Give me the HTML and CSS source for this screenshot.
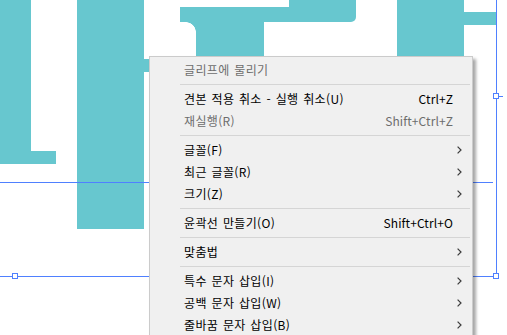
FILE: index.html
```html
<!DOCTYPE html>
<html lang="ko">
<head>
<meta charset="UTF-8">
<title>문자 메뉴</title>
<link rel="stylesheet" href="styles.css">
</head>
<body>
    <div class="canvas">
        <div class="shape s1"></div>
        <div class="shape s1-foot"></div>
        <div class="shape s2"></div>
        <div class="shape s2-edge"></div>
        <div class="shape s3-bar"></div>
        <div class="shape s3-top"></div>
        <div class="shape s3-stem"></div>
        <div class="shape s3-fillet"></div>
        <div class="shape s4"></div>
        <div class="shape s4-arm"></div>

        <div class="guide guide-v"></div>
        <div class="guide guide-h1"></div>
        <div class="guide guide-h2"></div>
        <div class="guide guide-tick"></div>
        <div class="handle h-left"></div>
        <div class="handle h-right"></div>
        <div class="handle h-mid"></div>
    </div>

    <ul class="menu">
        <li class="item disabled"><span class="label">글리프에 물리기</span></li>
        <li class="sep"></li>
        <li class="item"><span class="label">견본 적용 취소 - 실행 취소(U)</span><span class="key">Ctrl+Z</span></li>
        <li class="item disabled"><span class="label">재실행(R)</span><span class="key">Shift+Ctrl+Z</span></li>
        <li class="sep"></li>
        <li class="item sub"><span class="label">글꼴(F)</span><span class="key"></span><svg class="arrow" width="5" height="8" viewBox="0 0 5 8"><polyline points="0.6,0.6 4,4 0.6,7.4"/></svg></li>
        <li class="item sub"><span class="label">최근 글꼴(R)</span><span class="key"></span><svg class="arrow" width="5" height="8" viewBox="0 0 5 8"><polyline points="0.6,0.6 4,4 0.6,7.4"/></svg></li>
        <li class="item sub"><span class="label">크기(Z)</span><span class="key"></span><svg class="arrow" width="5" height="8" viewBox="0 0 5 8"><polyline points="0.6,0.6 4,4 0.6,7.4"/></svg></li>
        <li class="sep"></li>
        <li class="item"><span class="label">윤곽선 만들기(O)</span><span class="key">Shift+Ctrl+O</span></li>
        <li class="sep"></li>
        <li class="item sub"><span class="label">맞춤법</span><span class="key"></span><svg class="arrow" width="5" height="8" viewBox="0 0 5 8"><polyline points="0.6,0.6 4,4 0.6,7.4"/></svg></li>
        <li class="sep"></li>
        <li class="item sub"><span class="label">특수 문자 삽입(I)</span><span class="key"></span><svg class="arrow" width="5" height="8" viewBox="0 0 5 8"><polyline points="0.6,0.6 4,4 0.6,7.4"/></svg></li>
        <li class="item sub"><span class="label">공백 문자 삽입(W)</span><span class="key"></span><svg class="arrow" width="5" height="8" viewBox="0 0 5 8"><polyline points="0.6,0.6 4,4 0.6,7.4"/></svg></li>
        <li class="item sub"><span class="label">줄바꿈 문자 삽입(B)</span><span class="key"></span><svg class="arrow" width="5" height="8" viewBox="0 0 5 8"><polyline points="0.6,0.6 4,4 0.6,7.4"/></svg></li>
    </ul>
</body>
</html>
```

FILE: styles.css
```css
html,
body {
    margin: 0;
    padding: 0;
    width: 507px;
    height: 335px;
    overflow: hidden;
    background: #fff;
}
ul {
    margin: 0;
    padding: 0;
    list-style: none;
}
.canvas {
    position: relative;
    width: 507px;
    height: 335px;
}
/* glyph shapes on the artboard */
.shape {
    position: absolute;
    background: #67c7cf;
}
.s1 { left: 0; top: 0; width: 31px; height: 164px; }
.s1-foot { left: 0; top: 151px; width: 56px; height: 13px; }
.s2 { left: 77px; top: 0; width: 67px; height: 229px; }
.s2-edge { left: 144px; top: 59px; width: 10px; height: 13px; }
.s3-bar { left: 180px; top: 7px; width: 120px; height: 15px; }
.s3-top {
    left: 289px;
    top: 0;
    width: 67px;
    height: 22px;
    border-bottom-right-radius: 5px;
}
.s3-stem { left: 196px; top: 22px; width: 68px; height: 40px; }
.s3-fillet {
    left: 186px;
    top: 22px;
    width: 10px;
    height: 10px;
    background: radial-gradient(circle at 0 100%, transparent 9.5px, #67c7cf 10px);
}
.s4 { left: 397px; top: 0; width: 67px; height: 60px; }
.s4-arm { left: 464px; top: 12px; width: 33px; height: 13px; }

/* selection guides */
.guide {
    position: absolute;
    background: #4f80ff;
}
.guide-v { left: 496px; top: 0; width: 1px; height: 276px; }
.guide-h1 { left: 0; top: 182px; width: 493px; height: 1px; }
.guide-h2 { left: 0; top: 276px; width: 497px; height: 1px; }
.guide-tick { left: 497px; top: 96px; width: 6px; height: 1px; }
.handle {
    position: absolute;
    width: 4px;
    height: 4px;
    border: 1px solid #4f80ff;
    background: #fff;
}
.h-left { left: 12px; top: 273px; }
.h-right { left: 493px; top: 273px; }
.h-mid { left: 493px; top: 93px; }

/* context menu */
.menu {
    position: absolute;
    left: 149px;
    top: 56px;
    width: 322px;
    padding: 2px 0 10px;
    background: #f0f0f0;
    border: 1px solid #cbcbcb;
    box-shadow: 3px 3px 3px rgba(0, 0, 0, .35);
    font: 12px/22px "Noto Sans CJK KR", "Liberation Sans", sans-serif;
    color: #000;
}
.item {
    display: flex;
    align-items: center;
    height: 22px;
    padding-left: 34px;
}
.item .label {
    flex: 1;
    white-space: nowrap;
    letter-spacing: .35px;
    word-spacing: 1px;
}
.item .key {
    white-space: nowrap;
    letter-spacing: .1px;
}
.item.disabled {
    color: #6d6d6d;
}
.item::after {
    content: '';
    width: 19px;
}
.item.sub::after {
    width: 10px;
}
.arrow {
    margin-left: 4px;
    fill: none;
    stroke: #3c3c3c;
    stroke-width: 1.2;
}
.sep {
    height: 1px;
    margin: 3px 2px 3px 30px;
    background: #d5d5d5;
}
```
